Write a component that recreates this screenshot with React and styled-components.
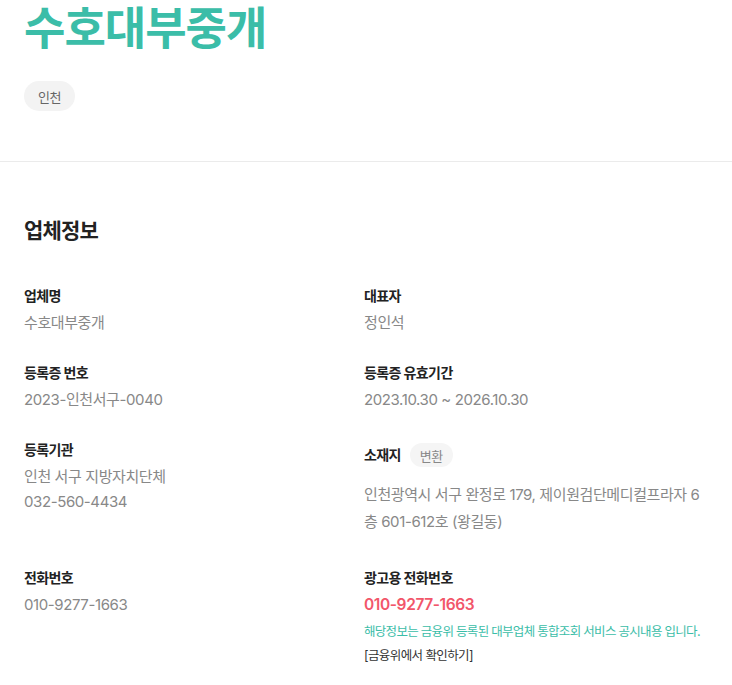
import styled, { createGlobalStyle } from "styled-components";

const GlobalStyle = createGlobalStyle`
  body {
    margin: 0;
    background: #fff;
    font-family: "Inter", "Noto Sans CJK KR", sans-serif;
    color: #222;
  }
`;

const info = [
  { label: "업체명", values: ["수호대부중개"] },
  { label: "대표자", values: ["정인석"] },
  { label: "등록증 번호", values: ["2023-인천서구-0040"] },
  { label: "등록증 유효기간", values: ["2023.10.30 ~ 2026.10.30"] },
  { label: "등록기관", values: ["인천 서구 지방자치단체", "032-560-4434"] },
];

export default function App() {
  return (
    <Page>
      <GlobalStyle />
      <Header>
        <Title>수호대부중개</Title>
        <Tag>인천</Tag>
      </Header>
      <Divider />
      <Section>
        <SectionTitle>업체정보</SectionTitle>
        <InfoGrid>
          {info.map((item) => (
            <Item key={item.label}>
              <Label>{item.label}</Label>
              {item.values.map((v) => (
                <Value key={v}>{v}</Value>
              ))}
            </Item>
          ))}
          <Item>
            <LabelRow>
              <Label>소재지</Label>
              <SmallPill>변환</SmallPill>
            </LabelRow>
            <Address>
              인천광역시 서구 완정로 179, 제이원검단메디컬프라자 6층 601-612호 (왕길동)
            </Address>
          </Item>
          <Item>
            <Label>전화번호</Label>
            <Value>010-9277-1663</Value>
          </Item>
          <Item>
            <Label>광고용 전화번호</Label>
            <Value $accent>010-9277-1663</Value>
            <Note>해당정보는 금융위 등록된 대부업체 통합조회 서비스 공시내용 입니다.</Note>
            <LinkText>[금융위에서 확인하기]</LinkText>
          </Item>
        </InfoGrid>
      </Section>
    </Page>
  );
}

const Page = styled.div`
  width: 100%;
`;

const Header = styled.header`
  padding: 0 24px 50px;
`;

const Title = styled.h1`
  margin: 0;
  font-size: 45px;
  line-height: 58px;
  font-weight: 700;
  color: #3bbda8;
  letter-spacing: -1px;
`;

const Tag = styled.span`
  display: inline-flex;
  align-items: center;
  height: 30px;
  margin-top: 23px;
  padding: 0 14px;
  border-radius: 15px;
  background: #f3f3f3;
  color: #666;
  font-size: 13px;
  letter-spacing: -0.5px;
`;

const Divider = styled.hr`
  margin: 0;
  border: none;
  border-top: 1px solid #ebebeb;
`;

const Section = styled.section`
  padding: 54px 24px 0;
`;

const SectionTitle = styled.h2`
  margin: 0 0 40px;
  font-size: 21px;
  line-height: 30px;
  font-weight: 700;
  color: #222;
  letter-spacing: -0.8px;
`;

const InfoGrid = styled.div`
  display: grid;
  grid-template-columns: 340px 1fr;
  row-gap: 28px;
`;

const Item = styled.div`
  display: flex;
  flex-direction: column;
  align-items: flex-start;
`;

const Label = styled.div`
  font-size: 14px;
  line-height: 20px;
  font-weight: 700;
  color: #222;
  letter-spacing: -0.6px;
  margin-bottom: 4px;
`;

const LabelRow = styled.div`
  display: flex;
  align-items: center;
  gap: 9px;
  height: 30px;
  ${Label} {
    margin-bottom: 0;
  }
`;

const SmallPill = styled.span`
  display: inline-flex;
  align-items: center;
  height: 24px;
  padding: 0 10px;
  border-radius: 12px;
  background: #f5f5f5;
  color: #888;
  font-size: 13px;
  letter-spacing: -0.5px;
`;

const Value = styled.div`
  font-size: ${(p) => (p.$accent ? "15.5px" : "15px")};
  line-height: 25px;
  font-weight: ${(p) => (p.$accent ? 600 : 400)};
  color: ${(p) => (p.$accent ? "#f2566a" : "#888")};
  letter-spacing: -0.4px;
`;

const Address = styled.div`
  margin-top: 11px;
  padding-bottom: 5px;
  font-size: 15px;
  line-height: 27px;
  color: #888;
  letter-spacing: -0.4px;
`;

const Note = styled.div`
  margin-top: 2px;
  font-size: 12.5px;
  line-height: 25px;
  color: #3bbda8;
  letter-spacing: -0.7px;
`;

const LinkText = styled.div`
  font-size: 12.5px;
  line-height: 23px;
  color: #333;
  letter-spacing: -0.6px;
`;
